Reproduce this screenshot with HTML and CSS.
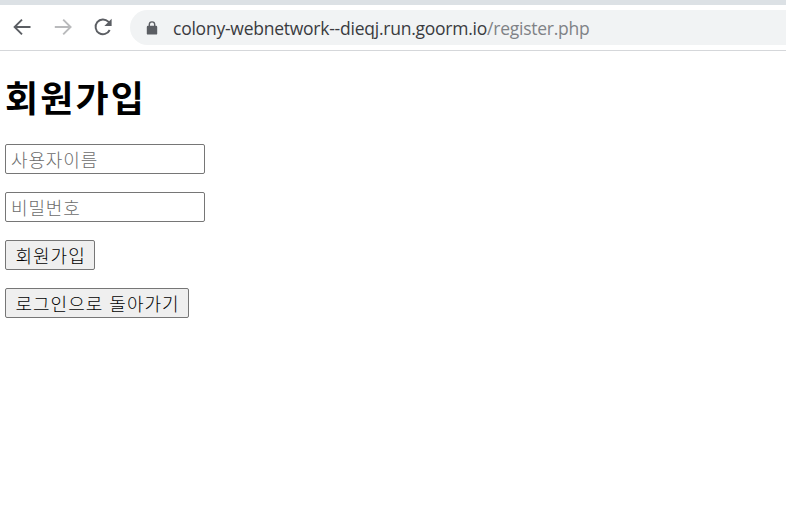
FILE: index.html
```html
<!DOCTYPE html>
<html lang="ko">
<head>
<meta charset="utf-8">
<title>회원가입</title>
<link rel="stylesheet" href="styles.css">
</head>
<body>
<header class="toolbar">
  <nav class="nav">
    <svg class="icon" viewBox="0 0 24 24"><path d="M20.5 12H5M12 4.6L4.6 12l7.4 7.4"/></svg>
    <svg class="icon disabled" viewBox="0 0 24 24"><path d="M3.8 12H19M12.2 4.6l7.4 7.4-7.4 7.4"/></svg>
    <svg class="icon" viewBox="0 0 24 24"><path d="M18.7 15A7.4 7.4 0 1 1 17.3 6.7L19 8.5"/><path class="solid" d="M20.6 3.7v7.2h-7.2z"/></svg>
  </nav>
  <div class="address">
    <svg class="lock" viewBox="0 0 12 14"><path d="M3.3 6V3.6a2.7 2.7 0 0 1 5.4 0V6"/><rect x="0.8" y="4.8" width="10.4" height="8.8" rx="1.2"/></svg>
    <span class="url"><span class="host">colony-webnetwork--dieqj.run.goorm.io</span><span class="path">/register.php</span></span>
  </div>
</header>
<main class="page">
  <h1>회원가입</h1>
  <form class="form">
    <input type="text" placeholder="사용자이름">
    <input type="password" placeholder="비밀번호">
    <button class="join" type="button">회원가입</button>
    <button class="back" type="button">로그인으로 돌아가기</button>
  </form>
</main>
</body>
</html>
```
FILE: styles.css
```css
* { box-sizing: border-box; }
body {
  margin: 0;
  background: #fff;
  color: #000;
  font-family: "Noto Sans CJK KR", sans-serif;
  overflow: hidden;
}
.toolbar {
  display: flex;
  height: 51px;
  padding-top: 5px;
  border-top: 5px solid #dce1e5;
  border-bottom: 1px solid #d5d7da;
}
.nav {
  display: flex;
  gap: 16.5px;
  width: 130px;
  padding: 5px 0 0 10px;
}
.icon {
  flex: none;
  width: 24px;
  height: 24px;
  fill: none;
  stroke: #5b5e63;
  stroke-width: 1.9;
}
.disabled { stroke: #b9babc; }
.icon .solid { fill: #5b5e63; stroke: none; }
.address {
  display: flex;
  flex: 1;
  align-items: center;
  height: 35px;
  padding-left: 16px;
  border-radius: 18px 0 0 18px;
  background: #f1f3f4;
}
.lock {
  width: 12px;
  height: 14px;
  margin-right: 15px;
  fill: #5b5e63;
}
.lock path { fill: none; stroke: #5b5e63; stroke-width: 1.4; }
.url {
  font: 400 17.5px/24px "Open Sans", sans-serif;
  letter-spacing: -0.24px;
  white-space: nowrap;
}
.host { color: #3a3b3f; }
.path { color: #7f8286; }
.page { padding: 23px 5px 0; }
h1 {
  margin: 0 0 26px;
  font-size: 36px;
  line-height: 44px;
  font-weight: 700;
  letter-spacing: 2.1px;
}
.form {
  display: flex;
  flex-direction: column;
  align-items: flex-start;
  gap: 18px;
}
input, button {
  height: 30px;
  margin: 0;
  border: 1px solid #767676;
  border-radius: 2px;
  font: 300 18px/24px "Noto Sans CJK KR", sans-serif;
  letter-spacing: 0.85px;
}
input { width: 200px; padding: 0 5px 1px 5px; background: #fff; }
input::placeholder { color: #6c6c6c; opacity: 1; }
button {
  padding: 0 0 1px 9.5px;
  background: #efefef;
  color: #000;
  text-align: left;
  white-space: nowrap;
  letter-spacing: 1px;
}
.join { width: 90px; }
.back { width: 184px; }
```
